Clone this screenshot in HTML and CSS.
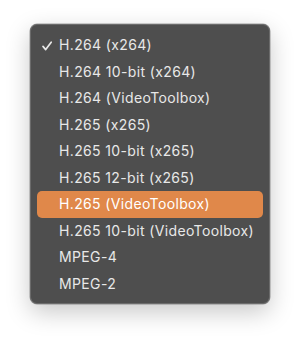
FILE: index.html
```html
<!DOCTYPE html>
<html lang="en">
<head>
    <meta charset="UTF-8">
    <title>Encoder menu</title>
    <link rel="stylesheet" href="styles.css">
</head>
<body>
    <ul class="menu">
        <li class="menu-item checked">
            <svg class="check" viewBox="0 0 10 10" width="10" height="10">
                <polyline points="1,5.4 3.7,8.6 9.2,1.2" fill="none" stroke="currentColor" stroke-width="1.7" stroke-linecap="round" stroke-linejoin="round"/>
            </svg>
            H.264 (x264)
        </li>
        <li class="menu-item">H.264 10-bit (x264)</li>
        <li class="menu-item">H.264 (VideoToolbox)</li>
        <li class="menu-item">H.265 (x265)</li>
        <li class="menu-item">H.265 10-bit (x265)</li>
        <li class="menu-item">H.265 12-bit (x265)</li>
        <li class="menu-item active">H.265 (VideoToolbox)</li>
        <li class="menu-item">H.265 10-bit (VideoToolbox)</li>
        <li class="menu-item">MPEG-4</li>
        <li class="menu-item">MPEG-2</li>
    </ul>
</body>
</html>
```

FILE: styles.css
```css
* {
    margin: 0;
    padding: 0;
    box-sizing: border-box;
}

body {
    width: 300px;
    height: 340px;
    background: #ffffff;
    padding: 24px 30px;
    font-family: Inter, "Liberation Sans", Arial, sans-serif;
}

.menu {
    list-style: none;
    width: 240px;
    height: 280px;
    padding: 7px 6px;
    background: #4e4e4e;
    border: 1px solid #6b6b6b;
    border-radius: 7px;
    box-shadow: 0 0 0 0.5px rgba(0, 0, 0, 0.35), 0 8px 24px rgba(0, 0, 0, 0.22);
}

.menu-item {
    position: relative;
    height: 26.5px;
    line-height: 26.5px;
    padding-left: 22px;
    font-size: 14px;
    letter-spacing: 0.36px;
    color: #e8e8e8;
    border-radius: 5px;
    white-space: nowrap;
}

.menu-item.active {
    background: #e0884a;
    color: #ffffff;
}

.check {
    position: absolute;
    left: 5px;
    top: 9px;
    color: #e8e8e8;
}
```
